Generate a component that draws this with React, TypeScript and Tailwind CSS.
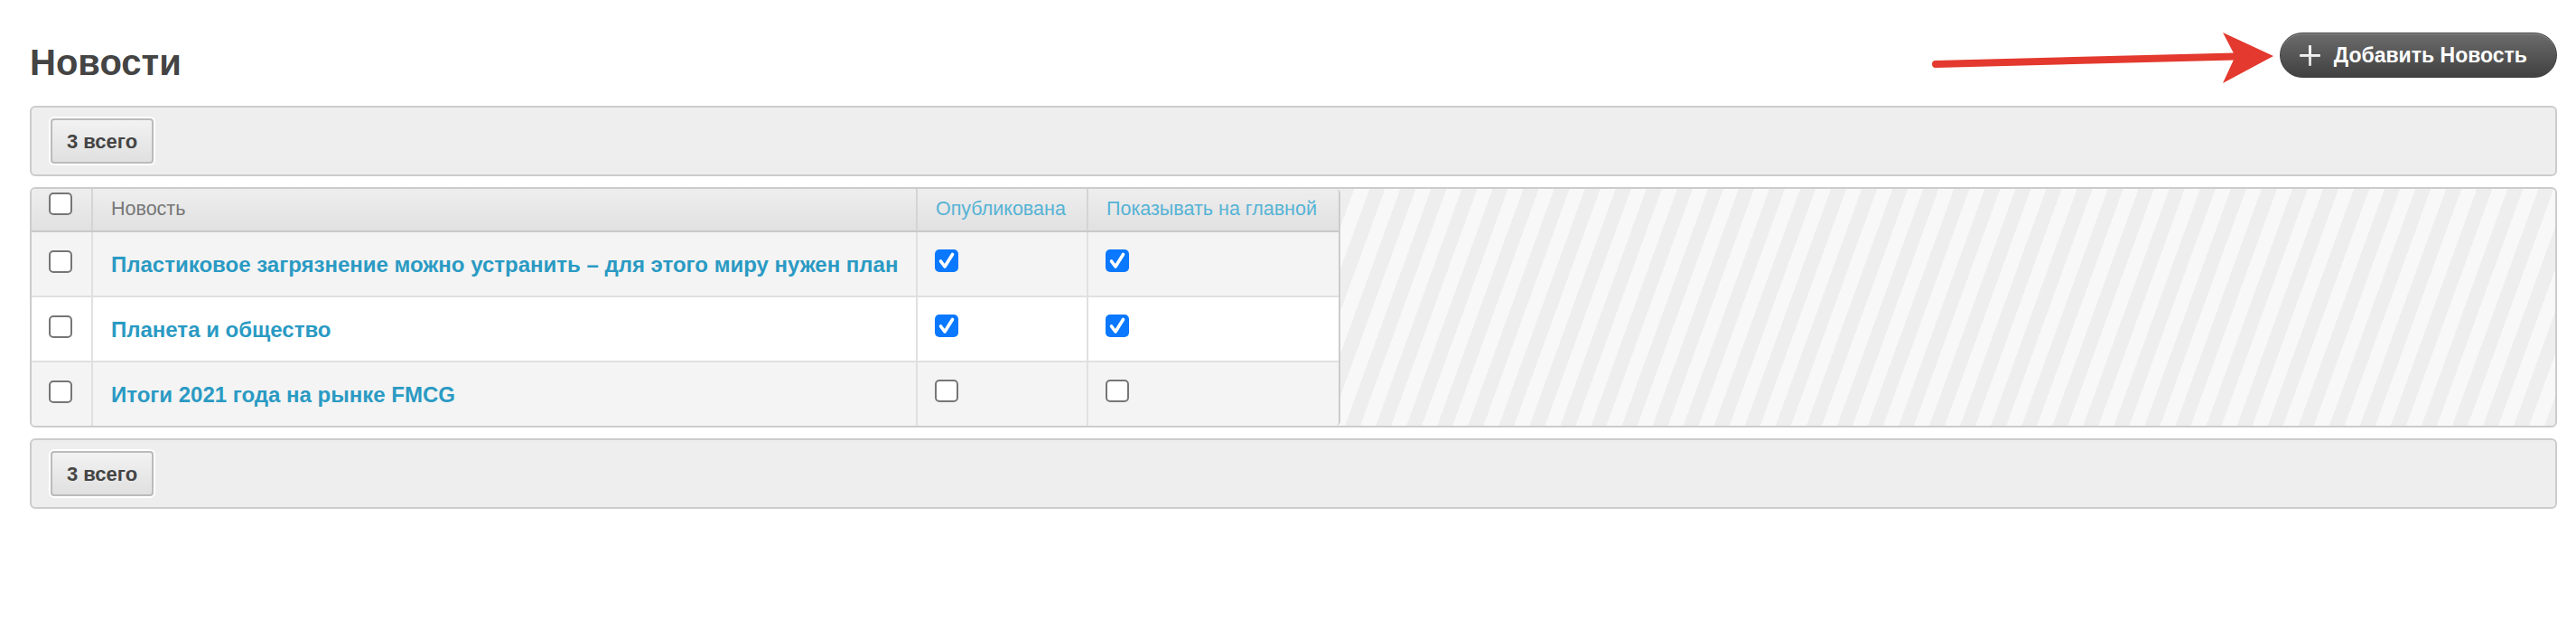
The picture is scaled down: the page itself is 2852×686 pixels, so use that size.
import React from "react";

type NewsRow = { title: string; published: boolean; onMain: boolean };

const rows: NewsRow[] = [
  { title: "Пластиковое загрязнение можно устранить – для этого миру нужен план", published: true, onMain: true },
  { title: "Планета и общество", published: true, onMain: true },
  { title: "Итоги 2021 года на рынке FMCG", published: false, onMain: false },
];

const font = { fontFamily: '"Liberation Sans", Arial, Helvetica, sans-serif' };

function Check({ checked }: { checked: boolean }) {
  if (!checked) {
    return <div className="h-[25px] w-[26px] shrink-0 rounded-[5px] border-2 border-[#767676] bg-white" />;
  }
  return (
    <div className="flex h-[25px] w-[26px] shrink-0 items-center justify-center rounded-[5px] bg-[#0a78ff]">
      <svg width="26" height="25" viewBox="0 0 26 25">
        <polyline points="6.5,13 11,19 19.5,5.5" fill="none" stroke="#fff" strokeWidth="3.6" strokeLinecap="round" strokeLinejoin="round" />
      </svg>
    </div>
  );
}

function CountBar() {
  return (
    <div className="rounded-[6px] border-2 border-[#cccccc] bg-[#eeeeee] px-[21px] py-[12px]">
      <button className="flex h-[50px] items-center rounded-[4px] border-2 border-[#bbbbbb] bg-gradient-to-b from-[#f2f2f2] to-[#e0e0e0] px-[16px] text-[22px] font-bold text-[#444444] shadow-[0_0_0_2px_#ffffff]">
        3 всего
      </button>
    </div>
  );
}

function PlusIcon() {
  return (
    <svg width="25" height="25" viewBox="0 0 25 25">
      <defs>
        <linearGradient id="pl" x1="0" y1="0" x2="0" y2="1">
          <stop offset="0" stopColor="#ffffff" />
          <stop offset="1" stopColor="#d8d8d8" />
        </linearGradient>
      </defs>
      <rect x="11" y="1" width="3" height="23" rx="1" fill="url(#pl)" />
      <rect x="1" y="11" width="23" height="3" rx="1" fill="url(#pl)" />
    </svg>
  );
}

export default function App() {
  return (
    <div className="relative min-h-[686px] bg-white pl-[33px] pr-[21px] pt-[36px]" style={font}>
      {/* red annotation arrow pointing at the add button */}
      <svg className="pointer-events-none absolute left-0 top-0" width="2852" height="120" viewBox="0 0 2852 120">
        <line x1="2143" y1="71" x2="2474" y2="62.5" stroke="#e3392e" strokeWidth="8" strokeLinecap="round" />
        <polygon points="2461,36 2517,62 2461,92 2473,66 2473,59" fill="#e3392e" />
      </svg>

      <div className="flex items-start justify-between">
        <h1 className="mt-[9px] text-[40px] font-bold leading-[48px] text-[#444444]">Новости</h1>
        <button className="flex h-[50px] items-center gap-[14px] rounded-full border border-[#3c3c3c] bg-gradient-to-b from-[#6c6c6c] to-[#414141] pl-[20px] pr-[32px] text-[23px] font-bold text-white shadow-[inset_0_1px_0_rgba(255,255,255,0.25)]">
          <PlusIcon />
          Добавить Новость
        </button>
      </div>

      <div className="mt-[24px]">
        <CountBar />
      </div>

      <div className="mt-[12px] flex overflow-hidden rounded-[6px] border-2 border-[#cccccc] bg-[repeating-linear-gradient(110deg,#f8f8f8_0px,#f8f8f8_16px,#eeeeee_16px,#eeeeee_32px)]">
        <div className="overflow-hidden rounded-r-[5px] border-r-2 border-[#cccccc]">
          <div className="grid grid-cols-[68px_913px_189px_277px] border-b-2 border-[#c9c9c9] bg-gradient-to-b from-[#eeeeee] to-[#e1e1e1] text-[21.5px] leading-[30px]">
            <div className="h-[46px] border-r-2 border-[#d4d4d4] pl-[19px] pt-[4px]">
              <Check checked={false} />
            </div>
            <div className="border-r-2 border-[#d4d4d4] px-[20px] pt-[7px] text-[#777777]">Новость</div>
            <div className="border-r-2 border-[#d4d4d4] px-[20px] pt-[7px] text-[#56b3d5]">Опубликована</div>
            <div className="whitespace-nowrap px-[20px] pt-[7px] text-[#56b3d5]">Показывать на главной</div>
          </div>
          {rows.map((row, i) => (
            <div
              key={row.title}
              className={
                "grid grid-cols-[68px_913px_189px_277px] " +
                (i % 2 === 0 ? "bg-[#f4f4f4] " : "bg-white ") +
                (i < rows.length - 1 ? "border-b-2 border-[#e0e0e0]" : "")
              }
            >
              <div className="h-[70px] border-r-2 border-[#e0e0e0] pl-[19px] pt-[20px]">
                <Check checked={false} />
              </div>
              <div className="whitespace-nowrap border-r-2 border-[#e0e0e0] px-[20px] pt-[21px] text-[24px] font-bold leading-[30px] text-[#2a9ac3]">
                {row.title}
              </div>
              <div className="border-r-2 border-[#e0e0e0] pl-[19px] pt-[19px]">
                <Check checked={row.published} />
              </div>
              <div className="pl-[19px] pt-[19px]">
                <Check checked={row.onMain} />
              </div>
            </div>
          ))}
        </div>
        <div className="flex-1" />
      </div>

      <div className="mt-[12px]">
        <CountBar />
      </div>
    </div>
  );
}
